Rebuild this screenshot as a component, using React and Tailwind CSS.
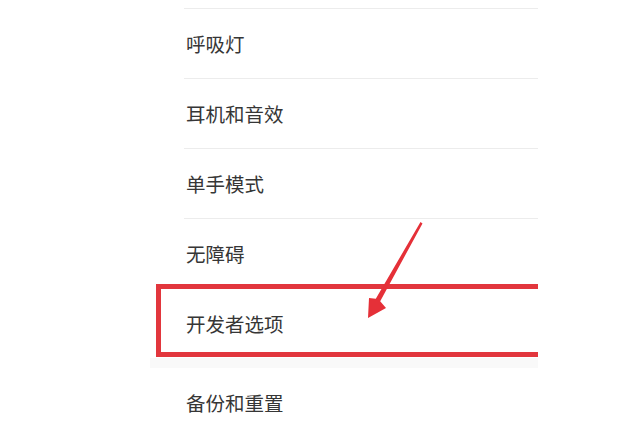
export default function App() {
  const rows = ["呼吸灯", "耳机和音效", "单手模式", "无障碍", "开发者选项"];
  return (
    <div
      className="relative w-[640px] h-[434px] overflow-hidden bg-white"
      style={{ fontFamily: '"Noto Sans CJK SC", "Noto Sans", sans-serif' }}
    >
      <div className="flex flex-col pt-[8px] pl-[184px] w-[538px]">
        {rows.map((t) => (
          <div
            key={t}
            className="h-[70px] border-t border-[#ececec] flex items-center pl-[2px] text-[19.5px] text-[#363636]"
          >
            {t}
          </div>
        ))}
        <div className="h-[10px] -ml-[34px] bg-[#f9f9f9]" />
        <div className="h-[70px] flex items-center pl-[2px] text-[19.5px] text-[#363636]">
          备份和重置
        </div>
      </div>

      {/* annotation: red box */}
      <div className="absolute left-[156px] top-[284px] w-[382px] h-[73px] border-t-[5px] border-l-[5px] border-b-[5px] border-[#e2363d]" />

      {/* annotation: arrow */}
      <svg
        className="absolute left-0 top-0 pointer-events-none"
        width="640"
        height="434"
        viewBox="0 0 640 434"
      >
        <polygon
          points="420.5,222 422.5,223.5 380.2,301.2 386,308 368,318 369,298 375.8,298.8"
          fill="#e53038"
        />
      </svg>
    </div>
  );
}
